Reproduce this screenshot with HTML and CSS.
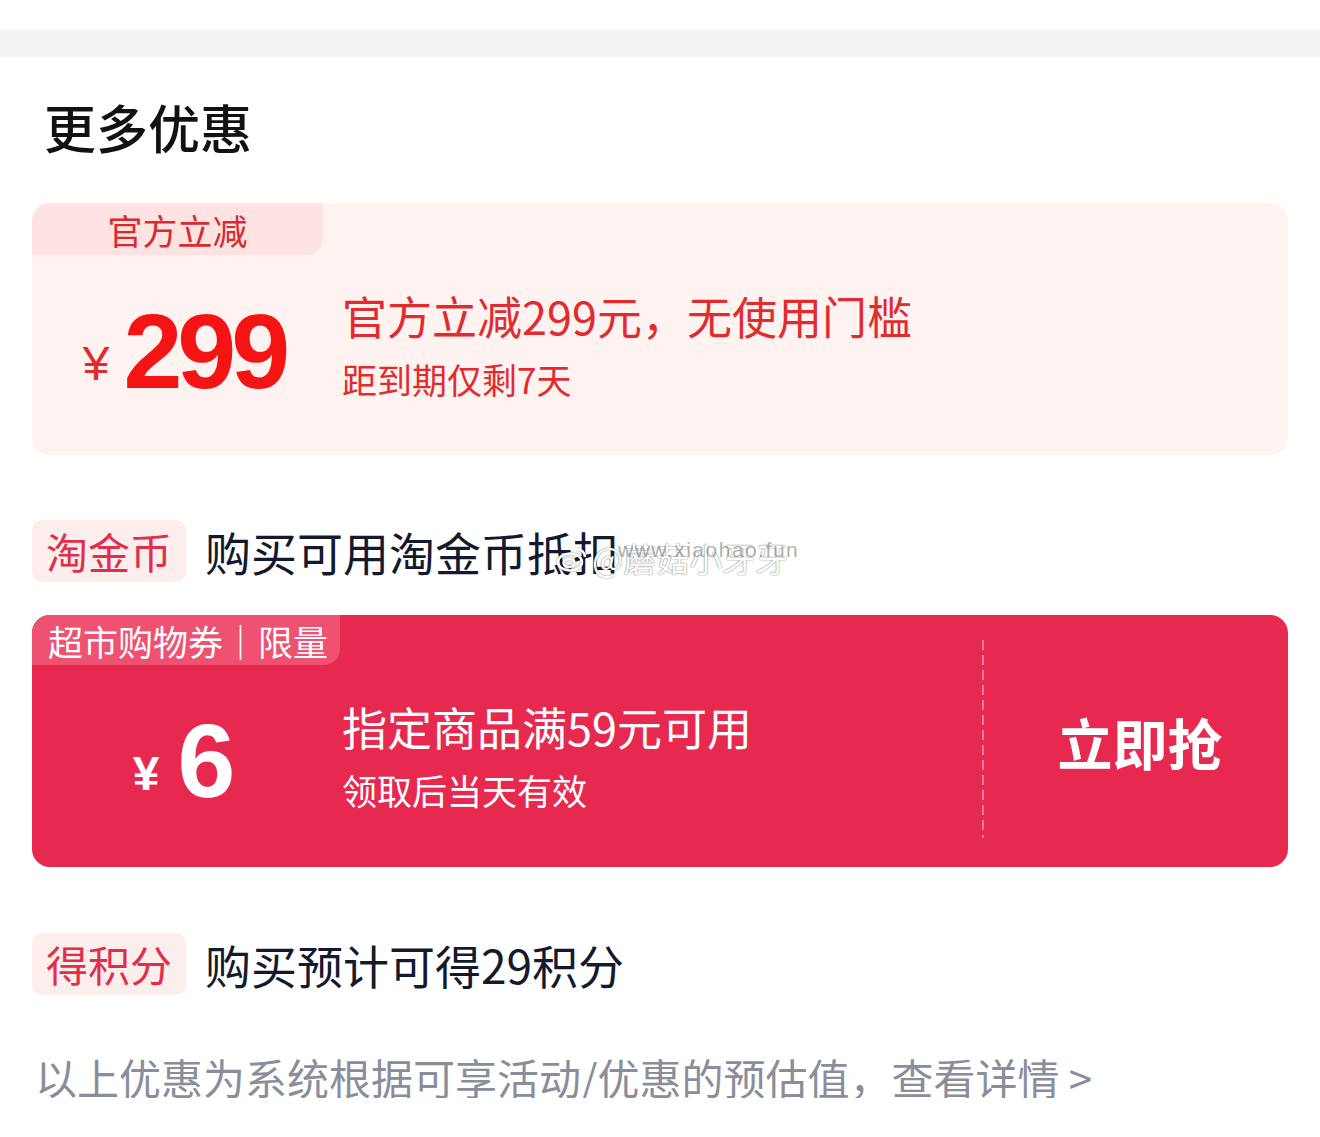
FILE: index.html
```html
<!DOCTYPE html>
<html lang="zh-CN">
<head>
<meta charset="utf-8">
<title>更多优惠</title>
<link rel="stylesheet" href="styles.css">
</head>
<body>
<div class="topband"></div>
<main class="panel">
  <h1 class="title">更多优惠</h1>

  <section class="card card-light">
    <div class="card-main">
      <div class="card-tag">官方立减</div>
      <div class="card-body">
        <div class="amount"><span class="yen">¥</span><span class="num">299</span></div>
        <div class="desc">
          <div class="desc-main">官方立减299元，无使用门槛</div>
          <div class="desc-sub">距到期仅剩7天</div>
        </div>
      </div>
    </div>
  </section>

  <div class="row">
    <span class="pill">淘金币</span>
    <span class="row-text">购买可用淘金币抵扣</span>
    <div class="watermark">
      <svg class="wm-logo" width="32" height="28" viewBox="0 0 32 28"><ellipse cx="14" cy="17" rx="12" ry="8.5" fill="none" stroke="#fff" stroke-width="2.5"/><ellipse cx="13" cy="18" rx="5.5" ry="4" fill="none" stroke="#fff" stroke-width="2.5"/><path d="M21 4a8 8 0 0 1 8 8" fill="none" stroke="#fff" stroke-width="2.5"/></svg>
      <span class="wm-name">@蘑菇小牙牙</span>
      <span class="wm-url">www.xiaohao.fun</span>
    </div>
  </div>

  <section class="card card-red">
    <div class="card-main">
      <div class="card-tag">超市购物券｜限量</div>
      <div class="card-body">
        <div class="amount"><span class="yen">¥</span><span class="num">6</span></div>
        <div class="desc">
          <div class="desc-main">指定商品满59元可用</div>
          <div class="desc-sub">领取后当天有效</div>
        </div>
      </div>
    </div>
    <div class="divider"></div>
    <div class="action">立即抢</div>
  </section>

  <div class="row">
    <span class="pill">得积分</span>
    <span class="row-text">购买预计可得29积分</span>
  </div>

  <p class="footnote">以上优惠为系统根据可享活动/优惠的预估值，查看详情 &gt;</p>
</main>
</body>
</html>
```
FILE: styles.css
```css
* { box-sizing: border-box; }
html, body { margin: 0; padding: 0; background: #ffffff; }
body {
  font-family: "Noto Sans CJK SC", "Noto Sans", sans-serif;
  color: #141a2e;
}
.topband {
  margin-top: 30px;
  height: 27px;
  background: #f2f3f5;
}
.panel {
  padding: 0 32px;
}
.title {
  margin: 44px 0 0 12px;
  font-size: 52px;
  line-height: 52px;
  font-weight: 500;
  color: #121212;
}
.card {
  margin-top: 50px;
  height: 252px;
  border-radius: 18px;
  display: flex;
  overflow: hidden;
}
.card-main {
  flex: 1;
  display: flex;
  flex-direction: column;
}
.card-tag {
  align-self: flex-start;
  display: flex;
  align-items: center;
  justify-content: center;
  border-radius: 0 0 16px 0;
  font-size: 35px;
  line-height: 35px;
}
.card-body {
  flex: 1;
  display: flex;
  align-items: flex-start;
}
.amount {
  width: 304px;
  display: flex;
  justify-content: center;
  align-items: baseline;
  font-family: "Liberation Sans", Arial, sans-serif;
  font-weight: 700;
}
.num {
  line-height: 1;
}
.desc {
  margin-left: 6px;
  display: flex;
  flex-direction: column;
  gap: 23px;
}
.desc-main {
  font-size: 45px;
  line-height: 45px;
}
.desc-sub {
  font-size: 35px;
  line-height: 35px;
}

/* light card */
.card-light {
  background: #fff3f1;
  color: #e12b2f;
}
.card-light .card-tag {
  width: 291px;
  height: 52px;
  background: #ffe2e2;
  color: #d92a2e;
}
.card-light .card-body { padding-top: 38px; }
.card-light .amount { padding-top: 5px; color: #f41414; }
.card-light .yen {
  font-size: 48px;
  font-weight: 400;
  margin-right: 14px;
  color: #e12b2f;
  position: relative;
  top: -8px;
}
.card-light .num {
  font-size: 106px;
  letter-spacing: -5px;
}

/* red card */
.card-red {
  margin-top: 33px;
  background: #e8294f;
  color: #ffffff;
}
.card-red .card-tag {
  width: 308px;
  height: 50px;
  background: #ef5271;
  color: #ffffff;
  padding-left: 4px;
}
.card-red .card-body { padding-top: 39px; }
.card-red .amount { padding-top: 5px; }
.card-red .yen {
  font-size: 48px;
  margin-right: 18px;
  position: relative;
  top: -7px;
}
.card-red .num {
  font-size: 104px;
}
.divider {
  width: 2px;
  margin: 25px 0 29px;
  background: repeating-linear-gradient(to bottom, #f27c97 0 10px, transparent 10px 15px);
}
.action {
  width: 304px;
  display: flex;
  align-items: center;
  justify-content: center;
  font-size: 55px;
  font-weight: 700;
  padding-left: 8px;
}

/* rows */
.row {
  margin-top: 65px;
  height: 62px;
  display: flex;
  align-items: center;
  gap: 19px;
  position: relative;
}
.pill {
  height: 62px;
  padding: 0 14px;
  display: flex;
  align-items: center;
  background: #fdeeee;
  border-radius: 10px;
  color: #e02f4a;
  font-size: 42px;
  line-height: 42px;
}
.row-text {
  font-size: 46px;
  line-height: 46px;
  color: #141a2e;
}
.row + .card { margin-top: 33px; }
.card-red + .row { margin-top: 65px; height: 63px; }

.footnote {
  margin: 61px 0 0 3px;
  font-size: 42px;
  line-height: 42px;
  color: #8a8e9b;
}

/* watermark overlay */
.watermark {
  position: absolute;
  left: 524px;
  top: 22px;
  display: flex;
  align-items: center;
  gap: 4px;
  pointer-events: none;
}
.wm-logo {
  filter: drop-shadow(0 0 1px rgba(0,0,0,0.45));
}
.wm-name {
  font-size: 33px;
  line-height: 33px;
  color: #ffffff;
  text-shadow: 0 0 1px rgba(0,0,0,0.55), 0 0 2px rgba(0,0,0,0.25);
}
.wm-url {
  position: absolute;
  left: 62px;
  top: -4px;
  font-family: "Liberation Sans", Arial, sans-serif;
  font-size: 21px;
  letter-spacing: 1.5px;
  color: rgba(120,120,120,0.6);
}
```
